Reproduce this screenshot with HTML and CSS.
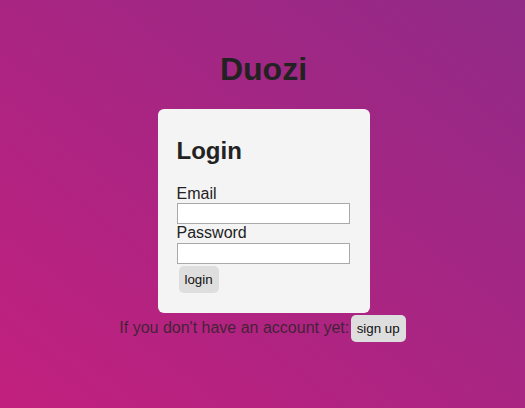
FILE: index.html
```html
<!DOCTYPE html>
<html lang="en">
<head>
<meta charset="utf-8">
<title>Duozi</title>
<link rel="stylesheet" href="styles.css">
</head>
<body>
<main class="page">
  <h1 class="title">Duozi</h1>
  <div class="card">
    <h2 class="card-title">Login</h2>
    <form class="form">
      <label class="label" for="email">Email</label>
      <input class="input" id="email" type="text">
      <label class="label" for="password">Password</label>
      <input class="input" id="password" type="password">
      <button class="btn btn-login" type="button">login</button>
    </form>
  </div>
  <p class="signup">If you don't have an account yet: <button class="btn" type="button">sign up</button></p>
</main>
</body>
</html>
```
FILE: styles.css
```css
html {
  height: 100%;
}
body {
  margin: 0;
  min-height: 100%;
  font-family: "Liberation Sans", Arial, sans-serif;
  color: #222;
  background: linear-gradient(to top right, #c2207e, #912a87);
}
.page {
  display: flex;
  flex-direction: column;
  align-items: center;
  padding-top: 51px;
  padding-left: 2px;
}
.title {
  margin: 0 0 21px;
  font-size: 32px;
  font-weight: bold;
  line-height: normal;
}
.card {
  background: #f4f4f4;
  border-radius: 6px;
  padding: 8px 20px 20px 19px;
}
.card-title {
  margin: 20px 0 20px;
  font-size: 24px;
  font-weight: bold;
  line-height: normal;
}
.form {
  display: flex;
  flex-direction: column;
  align-items: flex-start;
}
.label {
  font-size: 16px;
  line-height: 18.4px;
}
.input {
  box-sizing: border-box;
  width: 173px;
  height: 21px;
  margin: 0;
  padding: 1px 2px;
  border: 1px solid #a9a9a9;
  background: #fff;
  font-family: inherit;
  font-size: 13.33px;
}
.btn {
  border: none;
  border-radius: 5px;
  background: #dedede;
  color: #111;
  font-family: "Liberation Sans", Arial, sans-serif;
  font-size: 13.33px;
  padding: 6px 6px;
  line-height: 15px;
  margin: 0;
}
.btn-login {
  margin: 2px 0 0 2px;
}
.signup {
  margin: 2px 0 0;
  font-size: 16px;
  color: rgba(34, 34, 34, 0.78);
  padding-right: 2px;
}
.signup .btn {
  margin-left: -3px;
}
```
